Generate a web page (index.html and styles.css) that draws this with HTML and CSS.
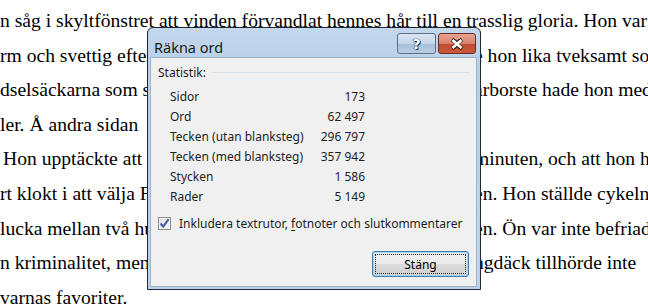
FILE: index.html
```html
<!DOCTYPE html>
<html lang="sv">
<head>
 <meta charset="utf-8">
 <title>Räkna ord</title>
 <link rel="stylesheet" href="styles.css">
</head>
<body>

 <div class="doc">
 <div class="line">n såg i skyltfönstret att vinden förvandlat hennes hår till en trasslig gloria. Hon var</div>
 <div class="line split"><span class="left">rm och svettig efter cykelturen och kände sig nästan lika blöt som</span><span class="right">e hon lika tveksamt som</span></div>
 <div class="line split"><span class="left">dselsäckarna som stod i hallen. En kam och en liten hårborste</span><span class="right">arborste hade hon med</span></div>
 <div class="line split"><span class="left">ler. Å andra sidan &nbsp; var det ingen som brydde sig.</span><span class="right"></span></div>
 <div class="line split indent"><span class="left">Hon upptäckte att lunchen redan var över på minuten</span><span class="right">minuten, och att hon hade</span></div>
 <div class="line split"><span class="left">rt klokt i att välja Fiskargatan som genväg hem igen. Hon ställde</span><span class="right">en. Hon ställde cykeln</span></div>
 <div class="line split"><span class="left">lucka mellan två hus och gick upp till porten igen. Ön var</span><span class="right">en. Ön var inte befriad</span></div>
 <div class="line split"><span class="left">n kriminalitet, men cyklar med smala däck och långdäck</span><span class="right">ngdäck tillhörde inte</span></div>
 <div class="line">varnas favoriter.</div>
 </div>

 <div class="dialog">
 <div class="titlebar">
 <span class="title">Räkna ord</span>
 <div class="caption-btns">
 <span class="cap-btn help">?</span>
 <span class="cap-btn close">
 <svg width="16" height="12" viewBox="0 0 16 12">
 <path d="M3 1.5 L8 5 L13 1.5 M3 10.5 L8 7 L13 10.5" fill="none" stroke="#3a2a26" stroke-width="4" stroke-linejoin="round"/>
 <path d="M3.5 2 L12.5 10 M12.5 2 L3.5 10" fill="none" stroke="#fff" stroke-width="2.4"/>
 </svg>
 </span>
 </div>
 </div>

 <div class="panel">
 <div class="group-head">
 <span>Statistik:</span>
 <span class="rule"></span>
 </div>

 <div class="stats">
 <span>Sidor</span><span class="num">173</span>
 <span>Ord</span><span class="num">62 497</span>
 <span>Tecken (utan blanksteg)</span><span class="num">296 797</span>
 <span>Tecken (med blanksteg)</span><span class="num">357 942</span>
 <span>Stycken</span><span class="num">1 586</span>
 <span>Rader</span><span class="num">5 149</span>
 </div>

 <label class="check">
 <span class="box">
 <svg width="11" height="11" viewBox="0 0 11 11">
 <path d="M1.5 5.5 L4.2 8.6 L9.6 1.2" fill="none" stroke="#3c5ca8" stroke-width="2"/>
 </svg>
 </span>
 <span>Inkludera textrutor, <u>f</u>otnoter och slutkommentarer</span>
 </label>

 <div class="actions">
 <button class="btn-close"><span class="focus">Stäng</span></button>
 </div>
 </div>
 </div>

</body>
</html>
```

FILE: styles.css
```css
 body {
 margin: 0;
 padding: 0;
 background: #fff;
 overflow: hidden;
 height: 304px;
 }

 .doc {
 font-family: "Liberation Serif", "Times New Roman", serif;
 font-size: 19.6px;
 line-height: 34.6px;
 color: #000;
 padding-top: 4px;
 white-space: nowrap;
 }

 .line {
 overflow: hidden;
 }

 .line.split {
 display: grid;
 grid-template-columns: 474px 1fr;
 }

 .line .left {
 overflow: hidden;
 }

 .line.indent .left {
 padding-left: 3px;
 }

 .line .right {
 overflow: hidden;
 }

 /* dialog */

 .dialog {
 position: absolute;
 left: 147px;
 top: 27px;
 width: 327px;
 height: 259px;
 border: 1px solid #1e2835;
 border-radius: 6px 6px 0 0;
 background: linear-gradient(#c3d7ed, #b9d0e9 40px, #bcd2ea);
 padding: 0 3px 2px 2px;
 font-family: "Noto Sans", "DejaVu Sans", sans-serif;
 font-size: 12px;
 color: #000;
 display: flex;
 flex-direction: column;
 }

 .titlebar {
 height: 29px;
 display: flex;
 align-items: flex-start;
 justify-content: space-between;
 padding-left: 4px;
 }

 .title {
 font-size: 14.5px;
 margin-top: 9px;
 color: #1a1a1a;
 }

 .caption-btns {
 display: flex;
 gap: 2px;
 margin-top: 5px;
 margin-right: 1px;
 }

 .cap-btn {
 height: 19px;
 border: 1px solid #5f6f82;
 border-radius: 3px;
 display: flex;
 align-items: center;
 justify-content: center;
 }

 .help {
 width: 37px;
 background: linear-gradient(#d9e6f4, #c4d6ea 50%, #a9bfd8 51%, #b9cde4);
 font-family: "DejaVu Sans", sans-serif;
 font-weight: bold;
 font-size: 14px;
 color: #fff;
 text-shadow: 0 0 1px #2c3a4a, 0 0 1px #2c3a4a, 1px 1px 0 #2c3a4a;
 }

 .close {
 width: 36px;
 border-color: #6a2d22;
 background: linear-gradient(#e8a393, #d7826d 50%, #c24a2f 51%, #c9593c);
 }

 .panel {
 flex: 1;
 background: #f0f0f0;
 border: 1px solid #9fb2c8;
 padding: 6px 7px 9px 6px;
 display: flex;
 flex-direction: column;
 }

 .group-head {
 display: flex;
 align-items: center;
 gap: 6px;
 height: 16px;
 padding-left: 1px;
 color: #1e1e1e;
 }

 .group-head .rule {
 flex: 1;
 height: 1px;
 background: #d5dfe5;
 margin-top: 1px;
 }

 .stats {
 display: grid;
 grid-template-columns: 150px 45px;
 grid-auto-rows: 20px;
 align-items: center;
 margin: 6px 0 0 13px;
 color: #1e1e1e;
 }

 .stats .num {
 text-align: right;
 }

 .check {
 display: flex;
 align-items: center;
 gap: 8px;
 height: 16px;
 margin-top: 9px;
 padding-left: 1px;
 color: #1e1e1e;
 }

 .check .box {
 width: 11px;
 height: 11px;
 border: 1px solid #8e8f8f;
 background: linear-gradient(135deg, #dcdcdc, #f8f8f8);
 box-shadow: inset 0 0 0 1px #f4f4f4;
 display: flex;
 }

 .check u {
 text-decoration: underline;
 text-underline-offset: 2px;
 }

 .actions {
 display: flex;
 justify-content: flex-end;
 margin-top: auto;
 }

 .btn-close {
 box-sizing: border-box;
 width: 97px;
 height: 26px;
 padding: 2px;
 border: 1px solid #3c7fb1;
 border-radius: 3px;
 background: linear-gradient(#f2f2f2, #ebebeb 50%, #dddddd 51%, #cfcfcf);
 box-shadow: inset 0 0 0 1px #9fd6f3;
 font-family: "Noto Sans", "DejaVu Sans", sans-serif;
 font-size: 12px;
 color: #000;
 display: flex;
 }

 .btn-close .focus {
 flex: 1;
 border: 1px dotted #222;
 display: flex;
 align-items: center;
 justify-content: center;
 }
```
